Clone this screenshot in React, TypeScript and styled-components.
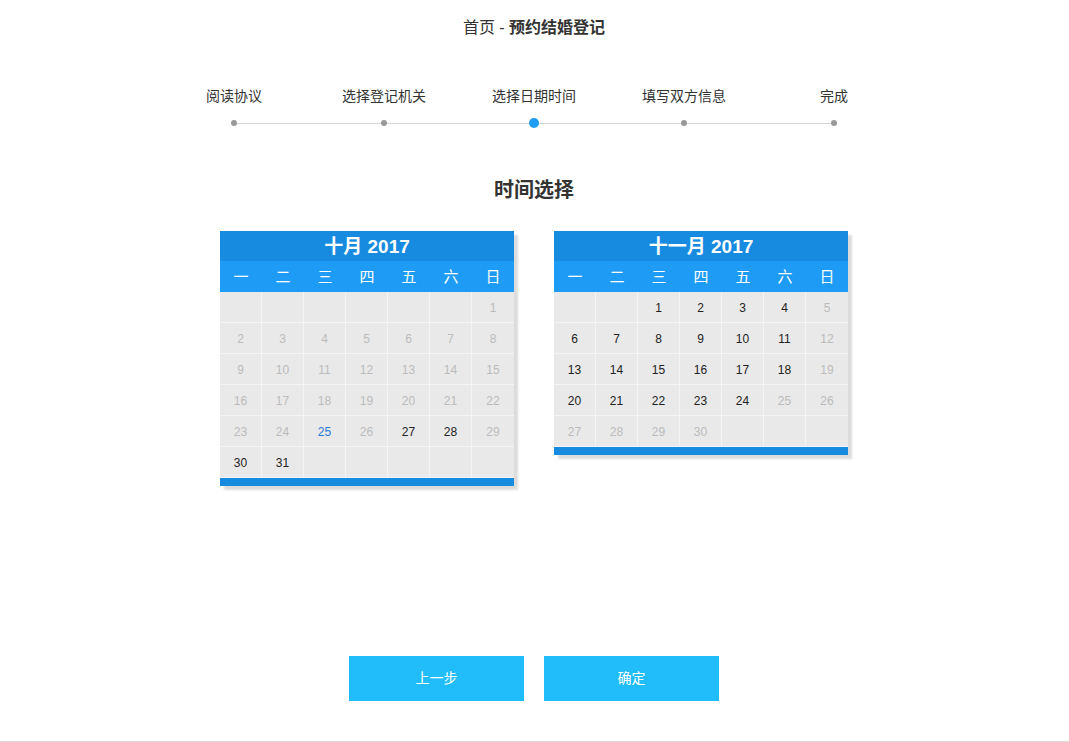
import React from "react";
import styled, { createGlobalStyle } from "styled-components";

const GlobalStyle = createGlobalStyle`
  body {
    margin: 0;
    background: #fff;
    font-family: "Liberation Sans", "Noto Sans CJK SC", sans-serif;
    color: #333;
  }
`;

const Page = styled.div`
  min-height: 741px;
  padding-right: 1px;
  border-bottom: 1px solid #dcdcdc;
  display: flex;
  flex-direction: column;
  align-items: center;
`;

const Crumb = styled.div`
  margin-top: 18px;
  font-size: 16px;
  line-height: 20px;
  color: #333;

  strong {
    font-weight: bold;
  }
`;

const Steps = styled.div`
  margin-top: 48px;
  width: 750px;
  display: grid;
  grid-template-columns: repeat(5, 1fr);
`;

const Step = styled.div`
  display: flex;
  flex-direction: column;
  align-items: center;
`;

const StepLabel = styled.div`
  font-size: 14px;
  line-height: 20px;
  color: #333;
  white-space: nowrap;
`;

const DotRow = styled.div`
  margin-top: 12px;
  width: 100%;
  height: 10px;
  display: flex;
  align-items: center;
`;

const Segment = styled.div<{ $show: boolean }>`
  flex: 1;
  height: 1px;
  background: ${({ $show }) => ($show ? "#d6d6d6" : "transparent")};
`;

const Dot = styled.div<{ $active: boolean }>`
  width: ${({ $active }) => ($active ? "10px" : "6px")};
  height: ${({ $active }) => ($active ? "10px" : "6px")};
  border-radius: 50%;
  background: ${({ $active }) => ($active ? "#1e9cf4" : "#999")};
  flex-shrink: 0;
`;

const Heading = styled.h2`
  margin: 48px 0 0;
  font-size: 20px;
  line-height: 28px;
  font-weight: bold;
  color: #333;
`;

const CalendarRow = styled.div`
  margin-top: 27px;
  display: flex;
  gap: 40px;
  align-items: flex-start;
`;

const Calendar = styled.div`
  width: 294px;
  background: #e9e9e9;
  box-shadow: 4px 4px 2px #dcdcdc;
`;

const MonthTitle = styled.div`
  height: 30px;
  box-sizing: border-box;
  padding-top: 2px;
  line-height: 28px;
  background: #178be0;
  color: #fff;
  text-align: center;
  font-size: 19px;
  font-weight: bold;
`;

const WeekRow = styled.div`
  display: grid;
  grid-template-columns: repeat(7, 1fr);
  height: 31px;
  background: #1e9cf5;
`;

const WeekDay = styled.div`
  color: #fff;
  font-size: 15px;
  line-height: 31px;
  text-align: center;
`;

const DayGrid = styled.div`
  display: grid;
  grid-template-columns: repeat(7, 1fr);
`;

type DayState = "off" | "on" | "today" | "empty";

const Day = styled.div<{ $state: DayState; $last: boolean }>`
  height: 31px;
  box-sizing: border-box;
  padding-top: 2px;
  border-bottom: 1px solid #f4f4f4;
  border-right: ${({ $last }) => ($last ? "none" : "1px solid #f4f4f4")};
  font-size: 12px;
  line-height: 28px;
  text-align: center;
  color: ${({ $state }) =>
    $state === "on" ? "#222" : $state === "today" ? "#2878d6" : "#bbb"};
`;

const BottomBar = styled.div`
  height: 8px;
  background: #178be0;
`;

const Buttons = styled.div`
  margin-top: 170px;
  display: flex;
  gap: 20px;
`;

const Button = styled.button`
  width: 175px;
  height: 45px;
  padding: 0 0 3px;
  border: none;
  background: #21bdfa;
  color: #fff;
  font-family: "Noto Sans CJK SC", sans-serif;
  font-size: 14px;
  line-height: 20px;
  cursor: pointer;
`;

const steps = ["阅读协议", "选择登记机关", "选择日期时间", "填写双方信息", "完成"];
const weekDays = ["一", "二", "三", "四", "五", "六", "日"];

type Cell = { n?: number; s: DayState };

function buildMonth(lead: number, days: number, state: (n: number) => DayState): Cell[] {
  const cells: Cell[] = [];
  for (let i = 0; i < lead; i++) cells.push({ s: "empty" });
  for (let n = 1; n <= days; n++) cells.push({ n, s: state(n) });
  while (cells.length % 7 !== 0) cells.push({ s: "empty" });
  return cells;
}

const october = buildMonth(6, 31, (n) =>
  n === 25 ? "today" : [27, 28, 30, 31].includes(n) ? "on" : "off"
);

const november = buildMonth(2, 30, (n) => {
  if (n >= 25) return "off";
  const dow = (n + 2) % 7; // 0 = Sunday, Nov 1 2017 is a Wednesday
  return dow === 0 ? "off" : "on";
});

const MonthCalendar: React.FC<{ title: string; cells: Cell[] }> = ({ title, cells }) => (
  <Calendar>
    <MonthTitle>{title}</MonthTitle>
    <WeekRow>
      {weekDays.map((d) => (
        <WeekDay key={d}>{d}</WeekDay>
      ))}
    </WeekRow>
    <DayGrid>
      {cells.map((c, i) => (
        <Day key={i} $state={c.s} $last={i % 7 === 6}>
          {c.n ?? ""}
        </Day>
      ))}
    </DayGrid>
    <BottomBar />
  </Calendar>
);

const App: React.FC = () => {
  return (
    <>
      <GlobalStyle />
      <Page>
        <Crumb>
          首页 - <strong>预约结婚登记</strong>
        </Crumb>
        <Steps>
          {steps.map((s, i) => (
            <Step key={s}>
              <StepLabel>{s}</StepLabel>
              <DotRow>
                <Segment $show={i > 0} />
                <Dot $active={i === 2} />
                <Segment $show={i < steps.length - 1} />
              </DotRow>
            </Step>
          ))}
        </Steps>
        <Heading>时间选择</Heading>
        <CalendarRow>
          <MonthCalendar title="十月 2017" cells={october} />
          <MonthCalendar title="十一月 2017" cells={november} />
        </CalendarRow>
        <Buttons>
          <Button>上一步</Button>
          <Button>确定</Button>
        </Buttons>
      </Page>
    </>
  );
};

export default App;
